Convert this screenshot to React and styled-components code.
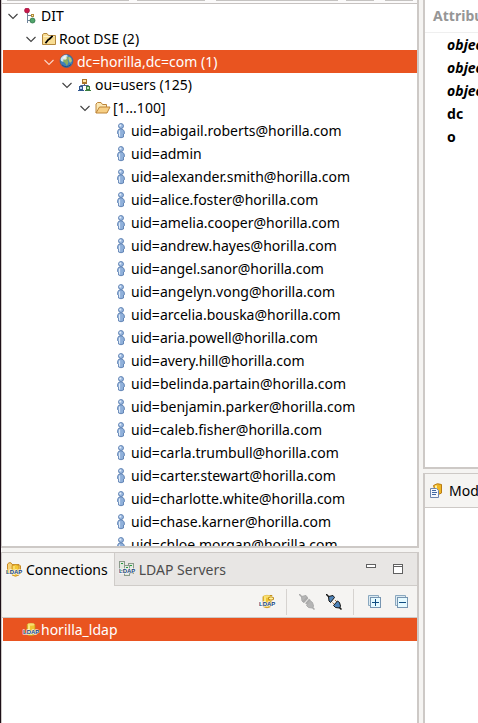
import React from 'react';
import styled, { createGlobalStyle, css } from 'styled-components';

const Global = createGlobalStyle`
  *, *::before, *::after { box-sizing: border-box; }
  html, body, #root { height: 100%; }
  body {
    margin: 0;
    background: #f5f4f2;
    color: #000;
    font: 14px/23px "Noto Sans", "Open Sans", sans-serif;
    overflow: hidden;
  }
  button { font: inherit; color: inherit; border: 0; padding: 0; background: none; }
`;

const Workbench = styled.main`
  display: grid;
  grid-template-columns: minmax(0, 419fr) 4px minmax(0, 55fr);
  height: 100%;
  border-left: 1px solid #1d0f18;
`;

const Column = styled.div`
  grid-column: ${(p) => p.$at};
  display: grid;
  grid-template-rows: ${(p) => p.$rows};
  min-width: 0;
  height: 100vh;
`;

const View = styled.section`
  display: flex;
  flex-direction: column;
  min-width: 0;
  min-height: 0;
  overflow: hidden;
  border: 1px solid #cdc9c6;
  border-right-width: 2px;
  border-bottom-width: ${(p) => (p.$open ? 0 : 2)}px;
  border-top-width: ${(p) => (p.$flush ? 0 : 1)}px;
`;

const SideView = styled(View)`
  border-left-width: 2px;
  border-right-width: 0;
`;

const ConnectionsView = styled(View)`
  margin-top: 4px;
`;

const EntryView = styled(SideView)`
  margin-bottom: 4px;
`;

const FilterBar = styled.div`
  flex: none;
  display: flex;
  height: 4px;
  padding: 0 4px 0 5px;
  background: #fbfafa;
  border-bottom: 1px solid #c6c2c0;
`;

const FilterEdge = styled.span`
  flex: ${(p) => p.$grow} 1 0;
  height: 1px;
  background: #c5c3c1;
  margin-right: ${(p) => p.$gap}px;
`;

const Tree = styled.ul`
  flex: 1;
  min-height: 0;
  overflow: hidden;
  margin: 0;
  padding: 0;
  list-style: none;
  background: #fff;
`;

const Row = styled.li`
  display: flex;
  align-items: center;
  height: 23px;
  padding-left: ${(p) => 4 + p.$depth * 18}px;
  margin-left: 1px;
  white-space: nowrap;
  ${(p) =>
    p.$selected &&
    css`
      background: #e95420;
      color: #fff;
    `}
`;

const UserRow = styled(Row)`
  padding-left: 110px;
`;

const ConnectionRow = styled(Row)`
  padding-left: 20px;
`;

const Toggle = styled.button`
  flex: none;
  display: flex;
  width: 12px;
  height: 12px;
  margin-right: 4px;
`;

const IconSlot = styled.span`
  flex: none;
  display: flex;
  width: 16px;
  height: 16px;
  margin-right: 2px;
`;

const TabBar = styled.div`
  flex: none;
  display: flex;
  height: 33px;
  background: #e8e6e4;
`;

const Tab = styled.button`
  display: flex;
  align-items: center;
  gap: 4px;
  padding: 0 6px 0 4px;
  white-space: nowrap;
  ${(p) =>
    p.$active
      ? css`
          background: #f5f4f2;
        `
      : css`
          color: #4c4c4c;
          border-left: 1px solid #cfccc9;
          border-bottom: 1px solid #cfccc9;
        `}
`;

const TabRest = styled.div`
  flex: 1;
  display: flex;
  justify-content: flex-end;
  align-items: center;
  gap: 11px;
  padding-right: 11px;
  border-bottom: 1px solid #cfccc9;
`;

const IconButton = styled.button`
  display: flex;
  width: 16px;
  height: 16px;
`;

const ToolBar = styled.div`
  flex: none;
  display: flex;
  justify-content: flex-end;
  align-items: center;
  gap: 11px;
  height: 32px;
  padding-right: 8px;
  background: #f5f4f2;
  border-bottom: 1px solid #cdc9c6;
`;

const Divider = styled.span`
  width: 1px;
  height: 26px;
  margin: 0 1px 0 0;
  background: #d6d3d0;
`;

const LogHeader = styled.div`
  flex: none;
  display: flex;
  height: 34px;
  background: #f5f4f2;
  border-bottom: 1px solid #cdc9c6;
`;

const LogBody = styled.div`
  flex: 1;
  background: #fff;
`;

const TableArea = styled.div`
  flex: 1;
  overflow: hidden;
  background: #fff;
`;

const Attributes = styled.table`
  border-collapse: collapse;
  white-space: nowrap;
  font-weight: 700;

  th {
    height: 32px;
    padding: 0 0 1px 8px;
    text-align: left;
    color: #969696;
    border-bottom: 1px solid #efefef;
  }
  td {
    height: 23px;
    padding: 0 0 0 22px;
  }
`;

const ObjectClass = styled.em`
  font-style: italic;
`;

const Svg = ({ children, size = 16, ...rest }) => (
  <svg width={size} height={size} viewBox={`0 0 ${size} ${size}`} aria-hidden="true" {...rest}>
    {children}
  </svg>
);

const Chevron = () => (
  <Svg size={12}>
    <path d="M1.500 4L6 8.500L10.500 4" fill="none" stroke="currentColor" strokeWidth="1.100" opacity=".75" />
  </Svg>
);

const DitIcon = () => (
  <Svg>
    <path d="M4.500 4V15M4.500 7.500H8M4.500 12.500H9" fill="none" stroke="#72859b" />
    <circle cx="4" cy="2.500" r="2.500" fill="#c8174a" stroke="#94143a" strokeWidth=".6" />
    <rect x="8.500" y="6.500" width="2" height="2" fill="#fff3b8" stroke="#b08a3a" />
    <circle cx="9.500" cy="12.500" r="2.500" fill="#50a56b" stroke="#2c7447" strokeWidth=".8" />
  </Svg>
);

const RootIcon = () => (
  <Svg>
    <path d="M1.500 13.500V3.500L3 2.500H6L7.500 4.500H14.500V13.500Z" fill="#f8dd93" stroke="#b4873c" />
    <path d="M2.500 5.500H13.500" stroke="#fff3cc" />
    <path d="M5 11.500L7.500 8.500L8.500 8L11 5.500" fill="none" stroke="#000" strokeWidth="1.800" strokeLinecap="square" />
  </Svg>
);

const GlobeIcon = () => (
  <Svg>
    <circle cx="7.500" cy="7" r="6.500" fill="#3d7fb9" stroke="#2c5e93" strokeWidth=".6" />
    <path d="M1.500 5Q3 1 7.500 .8L9 2L6.500 4.500L7 7L4.500 8L2 7Z" fill="#cfe7f2" />
    <path d="M5 4L8 2.500L10 4L8.500 6L9.500 8L8 12L6 9L4 7.500Z" fill="#8cac5f" />
    <path d="M9.500 2.500L12 4L13 7L11 9L9.500 6Z" fill="#b3c674" />
    <circle cx="6" cy="4" r="1.800" fill="#fff" opacity=".8" />
    <path d="M3 11Q7 14.500 12 10.500" fill="none" stroke="#234e83" />
  </Svg>
);

const OrgIcon = () => (
  <Svg>
    <path d="M7.500 6V8.500M3.500 10V8.500H11.500V10" fill="none" stroke="#4b6289" />
    <rect x="5.500" y="2.500" width="4" height="3" fill="#ffe4a0" stroke="#a9752b" />
    <path d="M5 6.500H10" stroke="#a9752b" />
    <rect x="2.500" y="9.500" width="3" height="3" fill="#b9d0f2" stroke="#31578f" />
    <path d="M1 13.500H7" stroke="#31578f" />
    <rect x="9.500" y="9.500" width="3" height="3" fill="#bce4b4" stroke="#3a7c3f" />
    <path d="M8 13.500H14" stroke="#3a7c3f" />
  </Svg>
);

const FolderIcon = () => (
  <Svg>
    <path d="M1 13V4L2.500 2.500H6L7.500 4.500H11.500V7" fill="#fbe8b5" stroke="#bd8438" />
    <path d="M1 13L4.500 7H15L12 13Z" fill="#f7cf84" stroke="#bd8438" />
  </Svg>
);

const PersonIcon = () => (
  <Svg>
    <path
      d="M5.500 6.500Q8 5 10 6.500Q11.500 7.500 11.500 10.500L10.500 11V14Q8 15.500 5.500 14V11L4.500 10.500Q4.500 7.500 5.500 6.500Z"
      fill="#8fb0da"
      stroke="#4f75a9"
      strokeWidth=".8"
    />
    <path d="M6.500 7.500V13.500" stroke="#dce9f7" strokeWidth="1.200" />
    <circle cx="8" cy="3" r="2.500" fill="#9bb8df" stroke="#4f75a9" strokeWidth=".8" />
    <circle cx="7.300" cy="2.500" r="1" fill="#e1edf9" />
  </Svg>
);

const LdapMark = styled.text`
  font: 700 6px "Liberation Sans", sans-serif;
  fill: #123f78;
  stroke: #fff;
  stroke-width: 1px;
  paint-order: stroke;
`;

const Cylinder = () => (
  <>
    <path d="M4 2.500Q8 0 12 2.500V12.500Q8 15 4 12.500Z" fill="#f0c52f" stroke="#c28f1d" strokeWidth=".8" />
    <path d="M6 3V12" stroke="#fff1a0" strokeWidth="1.500" />
    <ellipse cx="8" cy="2.500" rx="3.500" ry="1.200" fill="#f9df72" />
  </>
);

const LdapIcon = ({ kind }) => (
  <Svg overflow="visible">
    {kind === 'group' && (
      <>
        <path d="M1.500 11V2L3 .8H5L6 2.500H13L14.500 4V11.500H1.500Z" fill="#f8d377" stroke="#c78a27" />
        <path d="M6 3.500Q9.500 1.500 13 3.500V13Q9.500 15.500 6 13Z" fill="#f4c735" stroke="#c78a27" strokeWidth=".8" />
        <path d="M8 4V13" stroke="#fff1a0" />
      </>
    )}
    {kind === 'servers' && (
      <>
        <rect x=".5" y=".5" width="5" height="9" fill="#e2e8df" stroke="#8a9a8a" />
        <rect x="9.500" y="2.500" width="5" height="10" fill="#e2e8df" stroke="#8a9a8a" />
        <rect x="5.500" y="4.500" width="5" height="10" fill="#e2e8df" stroke="#8a9a8a" />
        <path d="M2 2.500H4M11 4.500H13M7 6.500H9" stroke="#249a3d" />
      </>
    )}
    {(kind === 'connection' || kind === 'new') && <Cylinder />}
    {kind === 'new' && <path d="M12 1V7.500M9 4.500H15" stroke="#c28f1d" strokeWidth="2.500" />}
    {kind === 'new' && <path d="M12 2V7M10 4.500H14" stroke="#fff1a0" />}
    <LdapMark x="0" y="12">LDAP</LdapMark>
  </Svg>
);

const PlugIcon = ({ off }) => {
  const ink = off ? '#aaa' : '#151515';
  const fill = off ? '#b5b5b5' : '#4f83b8';
  return (
    <Svg>
      <path d="M0 0L3 3M13 13L15.500 15.500" stroke={ink} strokeWidth="1.500" />
      <path d="M2.500 2.500L7 1.500L8.500 3.500L4.500 8.500L3 7Z" fill={fill} stroke={ink} />
      {off ? (
        <path d="M4.500 8L8.500 3.500M7 10L11 5.500" stroke="#aaa" strokeWidth="2.500" />
      ) : (
        <path d="M6.500 8.500L8.500 10.500M9 6L11 8" stroke="#b77a48" />
      )}
      <path d="M7.500 11.500L11.500 7L13.500 8.500L14.500 12L13.500 14L9.500 13.500Z" fill={fill} stroke={ink} />
    </Svg>
  );
};

const TreeBoxIcon = ({ expand }) => (
  <Svg>
    <path d="M2.500 11.500V1.500H12.500V4H5V11.500Z" fill="#dceaf2" stroke="#8aa8bf" />
    <rect x="4.500" y="3.500" width="10" height="10" fill="#e6faff" stroke="#7795b1" />
    <path d={expand ? 'M6 8.500H13M9.500 5V12' : 'M6 8.500H13'} stroke="#104d82" />
  </Svg>
);

const MinimizeIcon = () => (
  <Svg>
    <rect x="3.500" y="3.500" width="9" height="3" fill="#fff" stroke="#606060" />
  </Svg>
);

const MaximizeIcon = () => (
  <Svg>
    <rect x="3.500" y="3.500" width="9" height="9" fill="#fff" stroke="#606060" />
    <path d="M3 5.500H13" stroke="#606060" />
  </Svg>
);

const LogIcon = () => (
  <Svg>
    <path d="M4.500 2.500Q8 -.5 12.500 1.500V10Q10 12 7 11Z" fill="#f0b624" stroke="#b87b15" />
    <path d="M7 2.500V7" stroke="#fff0a2" strokeWidth="2" />
    <path d="M1.500 5.500H7.500L9.500 7.500V14.500H1.500Z" fill="#f6f8fd" stroke="#6f86ad" />
    <path d="M3 7.500H7M3 9.500H8M3 11.500H7" stroke="#4268a3" />
  </Svg>
);

const branches = [
  { label: 'DIT', icon: DitIcon },
  { label: 'Root DSE (2)', icon: RootIcon },
  { label: 'dc=horilla,dc=com (1)', icon: GlobeIcon, selected: true },
  { label: 'ou=users (125)', icon: OrgIcon },
  { label: '[1...100]', icon: FolderIcon },
];

const users = [
  'abigail.roberts@horilla.com',
  'admin',
  'alexander.smith@horilla.com',
  'alice.foster@horilla.com',
  'amelia.cooper@horilla.com',
  'andrew.hayes@horilla.com',
  'angel.sanor@horilla.com',
  'angelyn.vong@horilla.com',
  'arcelia.bouska@horilla.com',
  'aria.powell@horilla.com',
  'avery.hill@horilla.com',
  'belinda.partain@horilla.com',
  'benjamin.parker@horilla.com',
  'caleb.fisher@horilla.com',
  'carla.trumbull@horilla.com',
  'carter.stewart@horilla.com',
  'charlotte.white@horilla.com',
  'chase.karner@horilla.com',
  'chloe.morgan@horilla.com',
];

const filterEdges = [
  [122, 8],
  [68, 11],
  [122, 8],
  [28, 11],
  [28, 0],
];

export default function App() {
  return (
    <>
      <Global />
      <Workbench>
        <Column $at={1} $rows="minmax(0, 548fr) minmax(0, 175fr)">
          <View $flush aria-label="LDAP Browser">
            <FilterBar>
              {filterEdges.map(([grow, gap], i) => (
                <FilterEdge key={i} $grow={grow} $gap={gap} />
              ))}
            </FilterBar>
            <Tree role="tree">
              {branches.map(({ label, icon: Icon, selected }, depth) => (
                <Row key={label} role="treeitem" aria-expanded="true" $depth={depth} $selected={selected}>
                  <Toggle aria-label={`Collapse ${label}`}>
                    <Chevron />
                  </Toggle>
                  <IconSlot>
                    <Icon />
                  </IconSlot>
                  {label}
                </Row>
              ))}
              {users.map((uid) => (
                <UserRow key={uid} role="treeitem">
                  <IconSlot>
                    <PersonIcon />
                  </IconSlot>
                  uid={uid}
                </UserRow>
              ))}
            </Tree>
          </View>
          <ConnectionsView $open aria-label="Connections">
            <TabBar role="tablist">
              <Tab role="tab" aria-selected="true" $active>
                <LdapIcon kind="group" />
                Connections
              </Tab>
              <Tab role="tab" aria-selected="false">
                <LdapIcon kind="servers" />
                LDAP Servers
              </Tab>
              <TabRest>
                <IconButton aria-label="Minimize">
                  <MinimizeIcon />
                </IconButton>
                <IconButton aria-label="Maximize">
                  <MaximizeIcon />
                </IconButton>
              </TabRest>
            </TabBar>
            <ToolBar>
              <IconButton aria-label="New connection">
                <LdapIcon kind="new" />
              </IconButton>
              <Divider />
              <IconButton aria-label="Open connection" disabled>
                <PlugIcon off />
              </IconButton>
              <IconButton aria-label="Close connection">
                <PlugIcon />
              </IconButton>
              <Divider />
              <IconButton aria-label="Expand all">
                <TreeBoxIcon expand />
              </IconButton>
              <IconButton aria-label="Collapse all">
                <TreeBoxIcon />
              </IconButton>
            </ToolBar>
            <Tree>
              <ConnectionRow $selected>
                <IconSlot>
                  <LdapIcon kind="connection" />
                </IconSlot>
                horilla_ldap
              </ConnectionRow>
            </Tree>
          </ConnectionsView>
        </Column>
        <Column $at={3} $rows="minmax(0, 473fr) minmax(0, 250fr)">
          <EntryView $flush aria-label="Entry editor">
            <TableArea>
              <Attributes>
                <thead>
                  <tr>
                    <th scope="col">Attribute Description</th>
                  </tr>
                </thead>
                <tbody>
                  {[1, 2, 3].map((n) => (
                    <tr key={n}>
                      <td>
                        <ObjectClass>objectClass</ObjectClass>
                      </td>
                    </tr>
                  ))}
                  <tr>
                    <td>dc</td>
                  </tr>
                  <tr>
                    <td>o</td>
                  </tr>
                </tbody>
              </Attributes>
            </TableArea>
          </EntryView>
          <SideView $open aria-label="Modification Logs">
            <LogHeader>
              <Tab $active>
                <LogIcon />
                Modification Logs
              </Tab>
            </LogHeader>
            <LogBody />
          </SideView>
        </Column>
      </Workbench>
    </>
  );
}
